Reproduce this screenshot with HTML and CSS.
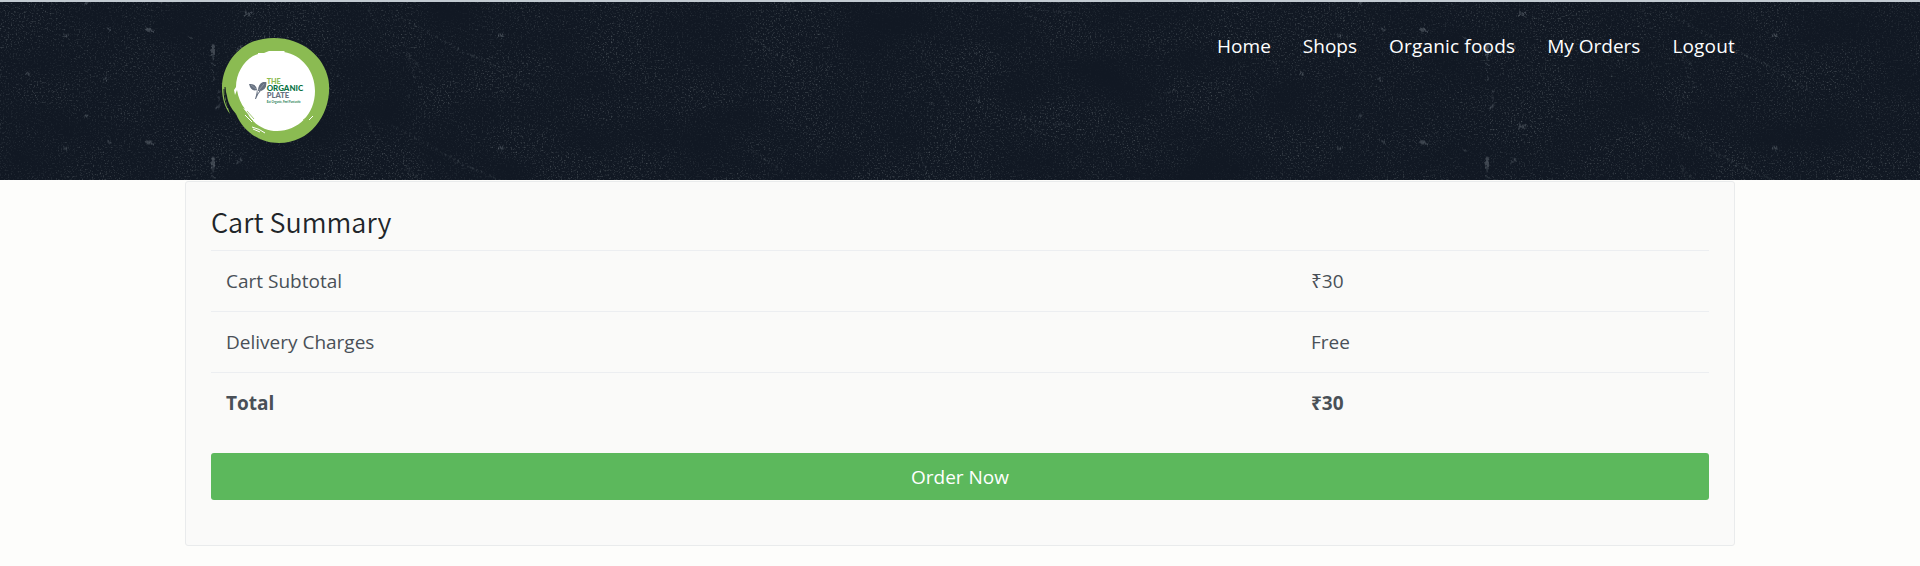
FILE: index.html
```html
<!DOCTYPE html>
<html lang="en">
<head>
<meta charset="utf-8">
<title>Cart Summary</title>
<link rel="stylesheet" href="styles.css">
</head>
<body>
<header class="site-header">
  <svg class="texture" width="1920" height="178" aria-hidden="true">
    <defs>
      <filter id="grain" x="0" y="0" width="100%" height="100%">
        <feTurbulence type="fractalNoise" baseFrequency="0.62" numOctaves="3" seed="8" result="fine"/>
        <feColorMatrix in="fine" values="0 0 0 0 .4  0 0 0 0 .45  0 0 0 0 .45  1.5 0 0 0 -.82" result="dots"/>
        <feTurbulence type="fractalNoise" baseFrequency="0.012 0.02" numOctaves="2" seed="4" result="coarse"/>
        <feColorMatrix in="coarse" values="0 0 0 0 1  0 0 0 0 1  0 0 0 0 1  2 0 0 0 -.3" result="mask"/>
        <feComposite in="dots" in2="mask" operator="in"/>
      </filter>
      <filter id="rough" x="-10%" y="-10%" width="120%" height="120%">
        <feTurbulence type="fractalNoise" baseFrequency="0.4" numOctaves="2" seed="3"/>
        <feDisplacementMap in="SourceGraphic" scale="6" xChannelSelector="R" yChannelSelector="G"/>
      </filter>
      <pattern id="scratches" width="1274" height="112.6" patternUnits="userSpaceOnUse" y="-2">
        <g fill="none" stroke="#8b949b" stroke-linecap="round" filter="url(#rough)">
          <g stroke-width="1.6" opacity=".36">
            <path d="M246 12q-1 4 3 3t2-3M64 35q2 4 4-1M146 29l8 2M236 50q3 0 5-3M499 35q2 4 4-1"/>
            <path d="M213 46v8" stroke-width="4"/>
            <path d="M213 56l1 26M219 90v18" stroke-width="1" stroke-dasharray="3 4"/>
            <path d="M27 73l2 1M105 79l2 0M85 4l2 0M108 28l1 2M190 37l1 1M216 107h2"/>
          </g>
          <g stroke-width="1.3" opacity=".2" stroke-dasharray="1 4">
            <path d="M366 5l12 22M392 13l34 18 32 18 48 22 32 22M405 43l10 36-6 18M752 38l30 20M918 36l14 38 18 33M1020 5l30 7 25 0M1026 14l20 9M1174 90l-30 16M410 55l12 17"/>
          </g>
          <g stroke-width="1.4" opacity=".32">
            <path d="M975 53h1M863 91h1M703 107h1M931 104h1M979 102h1M818 34h1M1058 3h1M420 87h1M337 76h1"/>
          </g>
        </g>
      </pattern>
    </defs>
    <rect width="1920" height="178" filter="url(#grain)" opacity=".65"/>
    <rect width="1920" height="178" fill="url(#scratches)"/>
  </svg>
  <div class="container header-row">
    <a class="brand" href="#">
      <svg class="logo" width="112" height="110" viewBox="0 0 112 110" aria-label="The Organic Plate">
        <path fill="#8bbb52" d="M53 0C81 0 103 18 107.500 42C112 72 92 105 58 105C38 105 22 93 15 76C10 70 7 65 6 58L4 50C4 60 6 68 9 76C4 70 1 60 1 50C1 25 20 4 42 1Q47 0 53 0z"/>
        <path fill="#fff" d="M48 13l16 0-1 1C81 17 94 33 94 53C94 76 77 93 56 93C44 93 32 86 27 76l-5-6 2 1C20 66 17 59 16 52L14 57l-1-5 2-3C15 36 22 24 32 18l5-2 0-1 6 0 5-2z"/>
        <path d="M4 49q0 16 7 25M3 51q0 12 4 19" stroke="#111823" stroke-width="1" fill="none"/>
        <path d="M23 74l9 9M26 73l7 8M82 85q10-6 13-14M82 82q8-4 10-9M85 86q4-2 6-5" stroke="#8bbb52" stroke-width=".8" fill="none"/>
        <path d="M31 89q8 2 13 6M32 91l7 3M24 77l7 7M88 82l4-4" stroke="#fff" stroke-width="1" fill="none"/>
        <path fill="#667080" d="M28 46q7-1 8 6-6 2-8-6zM37 53q0-7 5-9h3.300q1 9-8.300 9zM36 51q1 3 .5 5l3-5 1 1q-4 4-5.500 9h-1q2-7 2-10z"/>
        <path d="M38 52l5-6M30 47l5 4" stroke="#c8ccd2" stroke-width=".4"/>
        <g class="logo-word">
          <text x="45.700" y="46.200" fill="#8bbb52" textLength="14" lengthAdjust="spacingAndGlyphs">THE</text>
          <text x="45.700" y="53.200" fill="#087243" textLength="36.500" lengthAdjust="spacingAndGlyphs">ORGANIC</text>
          <text x="45.700" y="60.200" fill="#667080" textLength="22.500" lengthAdjust="spacingAndGlyphs">PLATE</text>
          <text class="logo-tag" x="45.700" y="64.600" fill="#16794d" textLength="34" lengthAdjust="spacingAndGlyphs">Eat Organic, Feel Fantastic</text>
        </g>
      </svg>
    </a>
    <nav class="nav">
      <a href="#">Home</a>
      <a href="#">Shops</a>
      <a class="wide" href="#">Organic foods</a>
      <a href="#">My Orders</a>
      <a class="wide" href="#">Logout</a>
    </nav>
  </div>
</header>
<main class="container card">
  <h1 class="title">Cart Summary</h1>
  <div class="row"><span>Cart Subtotal</span><span>₹30</span></div>
  <div class="row"><span>Delivery Charges</span><span>Free</span></div>
  <div class="row total"><span>Total</span><span>₹30</span></div>
  <button class="order">Order Now</button>
</main>
</body>
</html>
```
FILE: styles.css
```css
* { box-sizing: border-box; }
body {
  margin: 0;
  height: 566px;
  overflow: hidden;
  background: #fdfdfb;
  color: #495057;
  font-family: "Open Sans", "Noto Sans", sans-serif;
  font-size: 19px;
}
.container { width: 1550px; margin: 0 auto; }
.site-header {
  position: relative;
  height: 180px;
  border-top: 2px solid #c2cad1;
  background: #111823;
}
.texture { position: absolute; top: 0; left: 0; }
.header-row {
  position: relative;
  display: flex;
  justify-content: space-between;
  align-items: flex-start;
}
.brand { display: block; padding: 36px 0 0 36px; }
.logo { display: block; }
.logo-word { font: 900 8px Lato, sans-serif; }
.logo-word .logo-tag { font-size: 3.2px; font-weight: 700; }
.nav { display: flex; gap: 32px; padding-top: 30px; line-height: 28px; }
.nav a { color: #fff; text-decoration: none; white-space: nowrap; }
.nav .wide { letter-spacing: 0.18px; }
.card {
  height: 365px;
  margin-top: 1px;
  padding: 24px 25px 0;
  border: 1px solid #e9ebec;
  border-radius: 3px;
  background: #fafaf9;
}
.title {
  height: 44px;
  margin: 0;
  color: #212529;
  font: 350 27px/32px "Noto Sans CJK SC", sans-serif;
}
.row {
  display: flex;
  align-items: center;
  height: 61px;
  padding-left: 15px;
  border-top: 1px solid #eceef1;
}
.row span:first-child { width: 1085px; }
.total { font-weight: 700; }
.order {
  display: block;
  width: 100%;
  height: 47px;
  margin-top: 20px;
  padding: 0;
  border: 0;
  border-radius: 3px;
  background: #5cb85c;
  color: #fff;
  font: inherit;
}
```
